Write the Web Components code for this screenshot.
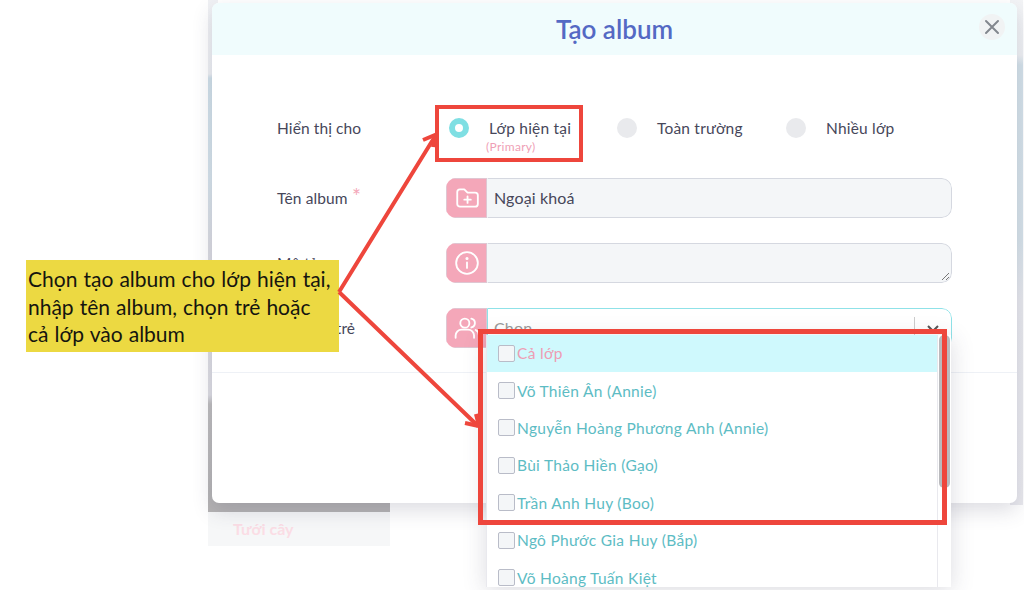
<!DOCTYPE html>
<html lang="vi">
<head>
<meta charset="utf-8">
<title>Tạo album</title>
<style>
  html, body { margin: 0; padding: 0; background: #fff; }
  body { width: 1024px; height: 590px; overflow: hidden; font-family: 'Lato', 'Noto Sans', sans-serif; }
</style>
</head>
<body>
<album-screen>
  <album-modal heading="Tạo album">
    <form-row label="Hiển thị cho" style="margin-bottom:5px">
      <radio-group>
        <radio-option checked sub="(Primary)" style="width:168px">Lớp hiện tại</radio-option>
        <radio-option style="width:169px">Toàn trường</radio-option>
        <radio-option>Nhiều lớp</radio-option>
      </radio-group>
    </form-row>
    <form-row label="Tên album" required>
      <text-field icon="folder" value="Ngoại khoá"></text-field>
    </form-row>
    <form-row label="Mô tả">
      <text-field icon="info" resize></text-field>
    </form-row>
    <form-row label="Gắn thẻ trẻ">
      <text-field icon="users" select value="Chọn"></text-field>
    </form-row>
  </album-modal>
  <option-list>
    <option-item first>Cả lớp</option-item>
    <option-item>Võ Thiên Ân (Annie)</option-item>
    <option-item>Nguyễn Hoàng Phương Anh (Annie)</option-item>
    <option-item>Bùi Thảo Hiền (Gạo)</option-item>
    <option-item>Trần Anh Huy (Boo)</option-item>
    <option-item>Ngô Phước Gia Huy (Bắp)</option-item>
    <option-item>Võ Hoàng Tuấn Kiệt</option-item>
  </option-list>
  <note-box>Chọn tạo album cho lớp hiện tại,<br>nhập tên album, chọn trẻ hoặc<br>cả lớp vào album</note-box>
  <guide-marks></guide-marks>
</album-screen>

<script>
const ICONS = {
  folder: '<path d="M3 6.5A2.5 2.5 0 0 1 5.5 4h4l3 3h7A2.5 2.5 0 0 1 22 9.5v8a2.5 2.5 0 0 1-2.5 2.5h-14A2.5 2.5 0 0 1 3 17.5z"/><path d="M12.5 10.5v6M9.5 13.5h6"/>',
  info: '<circle cx="12" cy="12" r="10"/><path d="M12 11.5v5"/><circle cx="12" cy="7.8" r=".6" fill="#fff"/>',
  users: '<circle cx="10" cy="7.5" r="4.2"/><path d="M1.5 21v-2a5.5 5.5 0 0 1 5.5-5.5h6a5.5 5.5 0 0 1 5.5 5.5v2"/><path d="M16 3.3a4.2 4.2 0 0 1 0 8.2M20 13.8a5.5 5.5 0 0 1 3 5v2.2"/>'
};

class AlbumScreen extends HTMLElement {
  constructor() {
    super();
    this.attachShadow({ mode: 'open' });
    this.shadowRoot.innerHTML = `
      <style>
        :host { display: block; position: relative; width: 1024px; height: 590px; overflow: hidden; background: #fff; }
        .left {
          position: absolute; left: 208px; top: 0; width: 10px; height: 505px;
          background: linear-gradient(180deg, #f0f1f4 0, #eceef2 74px, #cfdfe8 78px, #d5e2ea 180px, #d9dae0 245px, #dcdce2 395px, #bdbcbd 404px, #b4b3b4 505px);
        }
        .right {
          position: absolute; left: 1010px; top: 0; width: 13px; height: 505px;
          background: linear-gradient(180deg, #f3f4f6 0, #eef0f3 55px, #d3e1e9 65px, #d6e2e9 240px, #e6e7ec 300px, #e9e9ee 505px);
        }
        .card {
          position: absolute; left: 208px; top: 512px; width: 182px; height: 34px;
          background: #f6f7f8; color: #fbdde5; font: 700 16px 'Lato', sans-serif;
          padding: 7px 25px; box-sizing: border-box;
        }
        .under { position: absolute; left: 208px; top: 500px; width: 182px; height: 12px; background: #b5b3b4; }
      </style>
      <div class="left"></div>
      <div class="right"></div>
      <div class="under"></div>
      <div class="card">Tưới cây</div>
      <slot></slot>`;
  }
}

class AlbumModal extends HTMLElement {
  constructor() {
    super();
    this.attachShadow({ mode: 'open' });
    this.shadowRoot.innerHTML = `
      <style>
        :host {
          display: flex; flex-direction: column; position: absolute; left: 212px; top: 3px;
          width: 805px; height: 500px; background: #fff; border-radius: 7px; overflow: hidden;
          box-shadow: 0 8px 20px rgba(60,60,90,.17);
        }
        header {
          height: 52px; flex: none; background: #f0fcfd; display: flex; align-items: center;
          justify-content: center; position: relative;
          color: #5469c4; font-size: 26px; font-weight: 600;
        }
        .close {
          position: absolute; right: 12px; top: 11px; width: 26px; height: 26px; border-radius: 50%;
          background: #f1f3f4; display: flex; align-items: center; justify-content: center;
        }
        main { height: 318px; flex: none; padding: 53px 65px 0; box-sizing: border-box; display: flex; flex-direction: column; gap: 25px; border-bottom: 1px solid #eef1f6; }
      </style>
      <header><span></span>
        <div class="close"><svg width="16" height="16" viewBox="0 0 16 16" fill="none" stroke="#83878e" stroke-width="2" stroke-linecap="round"><path d="M2 2l12 12M14 2L2 14"/></svg></div>
      </header>
      <main><slot></slot></main>`;
    this.shadowRoot.querySelector('header span').textContent = this.getAttribute('heading');
  }
}

class FormRow extends HTMLElement {
  constructor() {
    super();
    this.attachShadow({ mode: 'open' });
    const req = this.hasAttribute('required') ? '<i>*</i>' : '';
    this.shadowRoot.innerHTML = `
      <style>
        :host { display: flex; align-items: center; min-height: 40px; }
        label { width: 169px; flex: none; color: #47475a; font-size: 15.5px; font-weight: 400; position: relative; letter-spacing: .1px; padding-bottom: 1px; box-sizing: border-box; }
        i { color: #f4a7b9; font-style: normal; font-size: 21px; font-weight: 400; position: absolute; top: -4px; left: 75px; line-height: 1; }
        .c { flex: 1; }
      </style>
      <label>${this.getAttribute('label')}${req}</label>
      <div class="c"><slot></slot></div>`;
  }
}

class RadioGroup extends HTMLElement {
  constructor() {
    super();
    this.attachShadow({ mode: 'open' });
    this.shadowRoot.innerHTML = `<style>:host { display: flex; align-items: flex-start; height: 30px; padding: 10px 0 0 3px; }</style><slot></slot>`;
  }
}

class RadioOption extends HTMLElement {
  constructor() {
    super();
    this.attachShadow({ mode: 'open' });
    const on = this.hasAttribute('checked');
    const sub = this.getAttribute('sub');
    this.shadowRoot.innerHTML = `
      <style>
        :host { display: flex; align-items: flex-start; color: #47475a; font-size: 15.5px; font-weight: 400; letter-spacing: .2px; }
        .dot { width: 20px; height: 20px; border-radius: 50%; flex: none; margin-right: 20px; box-sizing: border-box; background: ${on ? '#fff' : '#e9eaed'}; border: ${on ? '6px solid #7fdfe3' : '0'}; }
        .t { line-height: 20px; white-space: nowrap; }
        small { display: block; color: #ef9fb6; font-size: 12px; line-height: 13px; margin-left: -3px; margin-top: 2px; font-weight: 400; letter-spacing: .3px; }
      </style>
      <div class="dot"></div>
      <div class="t"><slot></slot>${sub ? `<small>${sub}</small>` : ''}</div>`;
  }
}

class TextField extends HTMLElement {
  constructor() {
    super();
    this.attachShadow({ mode: 'open' });
    const isSelect = this.hasAttribute('select');
    const val = this.getAttribute('value') || '';
    this.shadowRoot.innerHTML = `
      <style>
        :host { display: block; }
        .wrap { display: flex; height: 40px; width: 506px; border-radius: 10px; overflow: hidden; box-sizing: border-box; }
        .addon { width: 41px; flex: none; background: #f4a7b9; display: flex; align-items: center; justify-content: center; box-shadow: inset 0 0 0 1px #dfc6d2; }
        .box {
          flex: 1; display: flex; align-items: center; padding: 0 0 2px 6px; position: relative;
          background: ${isSelect ? '#fff' : '#f4f6f8'};
          border: 1px solid ${isSelect ? '#8fe2e8' : '#d5d8e0'}; border-left-color: ${isSelect ? '#8fe2e8' : '#f4f6f8'};
          border-radius: 0 10px 10px 0; color: ${isSelect ? '#999' : '#47475a'}; font-size: 16px; font-weight: 400; letter-spacing: .15px;
        }
        .sep { position: absolute; right: 36px; top: 8px; height: 24px; width: 1px; background: #ccc; }
        .arrow { position: absolute; right: 12px; top: 16px; }
        .grip { position: absolute; right: 1px; bottom: 1px; }
      </style>
      <div class="wrap">
        <div class="addon"><svg width="26" height="26" viewBox="0 0 24 24" fill="none" stroke="#fff" stroke-width="1.7" stroke-linecap="round" stroke-linejoin="round">${ICONS[this.getAttribute('icon')]}</svg></div>
        <div class="box">${val}
          ${isSelect ? '<div class="sep"></div><svg class="arrow" width="12" height="8" viewBox="0 0 12 8" fill="none" stroke="#555" stroke-width="2"><path d="M1 1l5 5 5-5"/></svg>' : ''}
          ${this.hasAttribute('resize') ? '<svg class="grip" width="10" height="10" viewBox="0 0 10 10" stroke="#777" stroke-width="1"><path d="M2 9l7-7M6 9l3-3"/></svg>' : ''}
        </div>
      </div>`;
  }
}

class OptionList extends HTMLElement {
  constructor() {
    super();
    this.attachShadow({ mode: 'open' });
    this.shadowRoot.innerHTML = `
      <style>
        :host {
          display: block; position: absolute; left: 486px; top: 335px; width: 465px; height: 252px; overflow: hidden;
          background: #fff; box-shadow: 0 4px 22px rgba(60,60,90,.18);
        }
        .list { width: 452px; box-sizing: border-box; border-left: 1px solid #e9e9ee; border-right: 1px solid #e9e9ee; height: 100%; }
        .thumb { position: absolute; right: 1px; top: 0; width: 11px; height: 153px; background: #b9babd; border-radius: 5px; }
      </style>
      <div class="list"><slot></slot></div>
      <div class="thumb"></div>`;
  }
}

class OptionItem extends HTMLElement {
  constructor() {
    super();
    this.attachShadow({ mode: 'open' });
    const first = this.hasAttribute('first');
    this.shadowRoot.innerHTML = `
      <style>
        :host {
          display: flex; align-items: center; height: 37.4px; padding: 0 0 1px 11px; box-sizing: border-box;
          background: ${first ? '#cff9fd' : 'transparent'}; color: ${first ? '#ee9db4' : '#5dbcc4'};
          font-size: 15.5px; font-weight: 400; white-space: nowrap; letter-spacing: .3px;
        }
        .box { width: 15px; height: 15px; border: 1px solid #b9bcc8; border-radius: 2px; background: #f4f6f8; margin-right: 2px; flex: none; }
      </style>
      <div class="box"></div><slot></slot>`;
  }
}

class GuideMarks extends HTMLElement {
  constructor() {
    super();
    this.attachShadow({ mode: 'open' });
    this.shadowRoot.innerHTML = `
      <style>:host { display: block; position: absolute; inset: 0; pointer-events: none; }</style>
      <svg width="1024" height="590" fill="none" stroke="#ee463c">
        <rect x="437" y="107" width="144" height="53" stroke-width="4"/>
        <rect x="480.5" y="331.5" width="464" height="191" stroke-width="5"/>
        <path d="M339 292L434 138M339 292L478 426" stroke-width="4"/>
        <path d="M423 140L435 135L433 147M465 423L479 426L476 414" stroke-width="4"/>
      </svg>`;
  }
}

class NoteBox extends HTMLElement {
  constructor() {
    super();
    this.attachShadow({ mode: 'open' });
    this.shadowRoot.innerHTML = `
      <style>
        :host {
          display: block; position: absolute; left: 26px; top: 260px; width: 313px; height: 92px; box-sizing: border-box;
          background: #ecd942; color: #15150f; padding: 5px 2px; font-size: 21px; line-height: 27.5px; font-weight: 400; white-space: nowrap; word-spacing: .7px;
        }
      </style><slot></slot>`;
  }
}

customElements.define('album-screen', AlbumScreen);
customElements.define('album-modal', AlbumModal);
customElements.define('form-row', FormRow);
customElements.define('radio-group', RadioGroup);
customElements.define('radio-option', RadioOption);
customElements.define('text-field', TextField);
customElements.define('option-list', OptionList);
customElements.define('option-item', OptionItem);
customElements.define('guide-marks', GuideMarks);
customElements.define('note-box', NoteBox);
</script>
</body>
</html>
